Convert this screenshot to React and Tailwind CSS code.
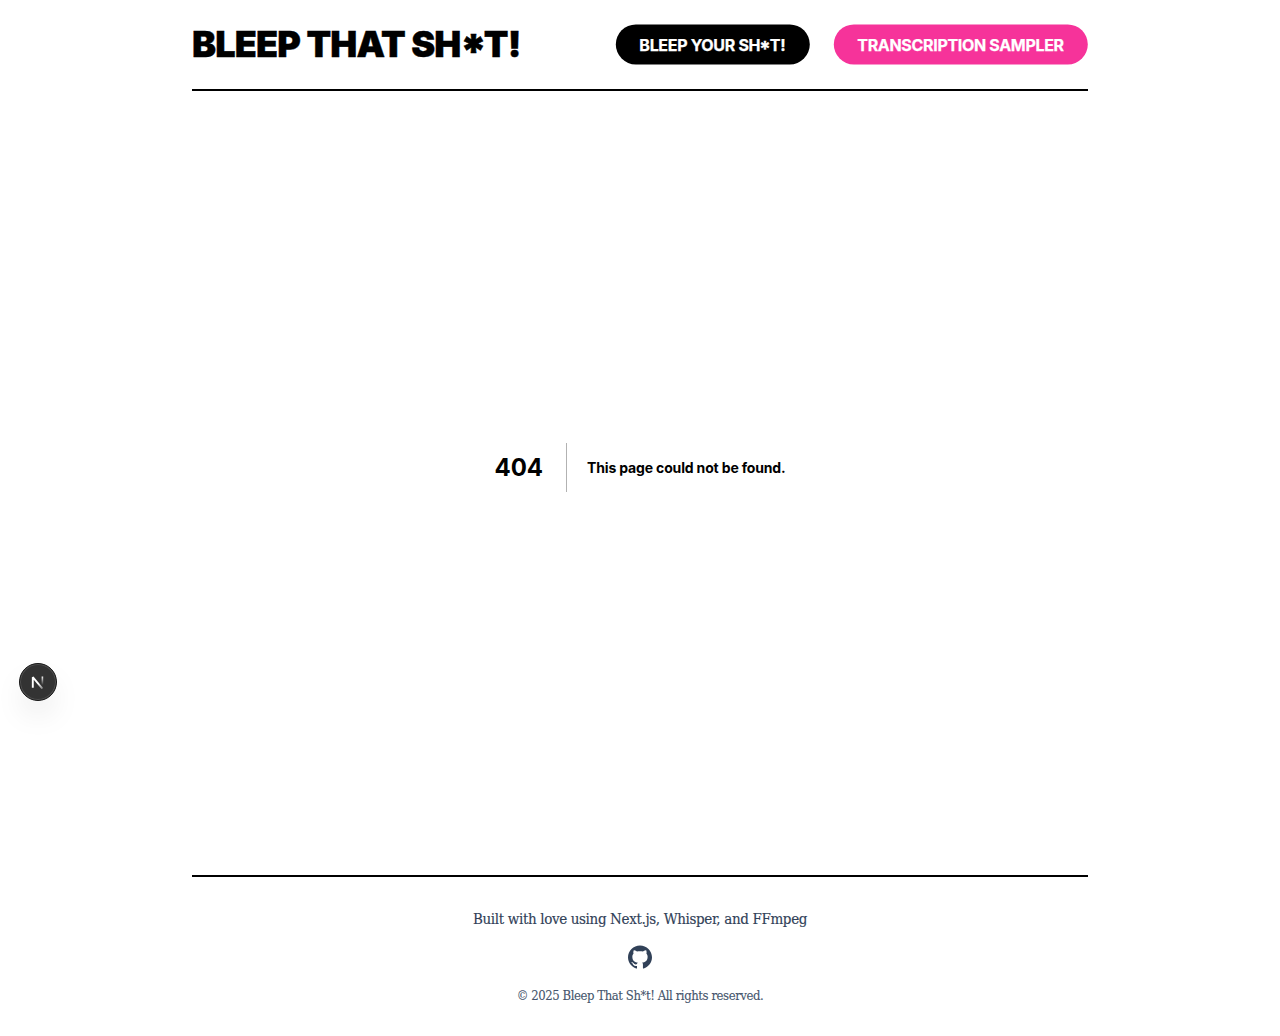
import React from "react";

function Asterisk() {
  return (
    <span className="inline-block origin-center translate-x-[0.01em] translate-y-[0.2em] scale-[1.28] px-[0.03em]">
      *
    </span>
  );
}

function Header() {
  return (
    <header className="flex h-[91px] items-center justify-between border-b-2 border-black pb-px">
      <h1 className="whitespace-nowrap pb-px text-[36px] font-black leading-none tracking-[-0.82px] [-webkit-text-stroke:0.4px_black]">
        BLEEP THAT SH<Asterisk />T!
      </h1>
      <nav className="flex -translate-x-[0.2px] translate-y-[0.4px] gap-6 text-base font-bold tracking-[-0.32px] text-white [-webkit-text-stroke:0.25px_white]">
        <a className="flex h-10 w-[194px] items-center justify-center whitespace-nowrap rounded-full bg-black pt-px">
          <span>BLEEP YOUR SH<Asterisk />T!</span>
        </a>
        <a className="flex h-10 w-[254.5px] items-center justify-center whitespace-nowrap rounded-full bg-[#f6339a] pt-px">
          TRANSCRIPTION SAMPLER
        </a>
      </nav>
    </header>
  );
}

function NotFound() {
  return (
    <main className="flex h-[784px] items-start justify-center pt-[352px]">
      <h2 className="mr-5 flex h-[49px] items-center border-r border-black/30 pr-[23px] text-2xl font-bold">
        404
      </h2>
      <p className="flex h-[49px] items-center text-sm font-bold tracking-[-0.16px]">
        This page could not be found.
      </p>
    </main>
  );
}

function GithubIcon() {
  return (
    <svg className="h-6 w-6" viewBox="0 0 24 24" fill="currentColor">
      <path d="M12 .5C5.37.5 0 5.78 0 12.292c0 5.211 3.438 9.63 8.205 11.188.6.111.82-.254.82-.567 0-.28-.01-1.022-.015-2.005-3.338.711-4.042-1.582-4.042-1.582-.546-1.361-1.335-1.725-1.335-1.725-1.087-.731.084-.716.084-.716 1.205.082 1.838 1.215 1.838 1.215 1.07 1.803 2.809 1.282 3.495.981.108-.763.417-1.282.76-1.577-2.665-.295-5.466-1.309-5.466-5.827 0-1.287.465-2.339 1.235-3.164-.135-.298-.54-1.497.105-3.121 0 0 1.005-.316 3.3 1.209.96-.262 1.98-.392 3-.398 1.02.006 2.04.136 3 .398 2.28-1.525 3.285-1.209 3.285-1.209.645 1.624.24 2.823.12 3.121.765.825 1.23 1.877 1.23 3.164 0 4.53-2.805 5.527-5.475 5.817.42.354.81 1.077.81 2.182 0 1.578-.015 2.846-.015 3.229 0 .309.21.678.825.56C20.565 21.917 24 17.495 24 12.292 24 5.78 18.627.5 12 .5z" />
    </svg>
  );
}

function Footer() {
  return (
    <footer className="flex flex-col items-center border-t-2 border-black pt-8 font-['DejaVu_Serif_Condensed','DejaVu_Serif',serif] text-[#314158]">
      <p className="whitespace-nowrap text-[15px] leading-5 tracking-[-0.36px] [-webkit-text-stroke:0.15px_#314158]">
        Built with love using Next.js, Whisper, and FFmpeg
      </p>
      <a className="mr-px mt-4" aria-label="GitHub">
        <GithubIcon />
      </a>
      <p className="mt-[19px] whitespace-nowrap text-[13px] leading-4 tracking-[-0.43px] text-[#45556c] [-webkit-text-stroke:0.1px_#45556c]">
        © 2025 Bleep That Sh*t! All rights reserved.
      </p>
    </footer>
  );
}

function DevBadge() {
  return (
    <div className="fixed left-[19px] top-[663px] flex h-[38px] w-[38px] items-center justify-center rounded-full border border-[#171717] bg-[#333] shadow-[inset_0_0_0_1px_#505050,0_16px_32px_-8px_rgba(0,0,0,0.18)]">
      <svg width="14" height="14" viewBox="0 0 14 14" fill="none">
        <defs>
          <linearGradient id="diagonal" x1="8" y1="8" x2="12.5" y2="14" gradientUnits="userSpaceOnUse">
            <stop stopColor="#fff" />
            <stop offset="1" stopColor="#fff" stopOpacity="0.3" />
          </linearGradient>
          <linearGradient id="stem" x1="11" y1="1" x2="11" y2="10" gradientUnits="userSpaceOnUse">
            <stop stopColor="#fff" />
            <stop offset="1" stopColor="#fff" stopOpacity="0" />
          </linearGradient>
        </defs>
        <path d="M1.8 12.7V2.2L11.4 13.6" stroke="url(#diagonal)" strokeWidth="1.9" strokeLinejoin="bevel" />
        <path d="M11.4 1.5V10" stroke="url(#stem)" strokeWidth="1.6" />
      </svg>
    </div>
  );
}

export default function App() {
  return (
    <div className="h-[1036px] overflow-hidden bg-white font-['Inter',sans-serif] text-black">
      <div className="mx-auto w-[896px]">
        <Header />
        <NotFound />
        <Footer />
      </div>
      <DevBadge />
    </div>
  );
}
